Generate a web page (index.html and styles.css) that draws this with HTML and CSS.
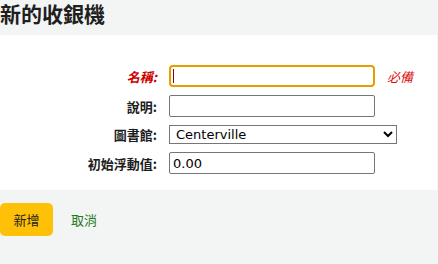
FILE: index.html
```html
<!DOCTYPE html>
<html lang="zh-Hant">
<head>
<meta charset="utf-8">
<title>新的收銀機</title>
<link rel="stylesheet" href="styles.css">
</head>
<body>
<h1 class="title">新的收銀機</h1>
<form class="form">
  <div class="panel">
    <div class="row">
      <label class="label required" for="name">名稱:</label>
      <span class="field-wrap">
        <input id="name" class="input input-focus" type="text">
        <span class="caret"></span>
      </span>
      <span class="req-note">必備</span>
    </div>
    <div class="row">
      <label class="label" for="desc">說明:</label>
      <input id="desc" class="input" type="text">
    </div>
    <div class="row">
      <label class="label" for="branch">圖書館:</label>
      <select id="branch" class="select">
        <option>Centerville</option>
      </select>
    </div>
    <div class="row">
      <label class="label" for="float">初始浮動值:</label>
      <input id="float" class="input" type="text" value="0.00">
    </div>
  </div>
  <div class="actions">
    <button type="button" class="btn-primary">新增</button>
    <a class="cancel" href="#">取消</a>
  </div>
</form>
</body>
</html>
```

FILE: styles.css
```css
html, body {
  margin: 0;
  padding: 0;
}
body {
  background: #f3f4f4;
  font-family: "DejaVu Sans", "Noto Sans CJK TC", sans-serif;
  color: #1d1d1d;
  width: 438px;
  height: 264px;
  overflow: hidden;
}
.title {
  margin: 0 0 8px 0;
  padding: 0;
  font-size: 21px;
  line-height: 27px;
  font-weight: bold;
  font-family: "Noto Sans CJK TC", sans-serif;
  color: #1f1f1f;
}
.form {
  margin: 0;
}
.panel {
  background: #fff;
  margin-right: 1px;
  padding: 30px 0 16px 0;
  display: flex;
  flex-direction: column;
  gap: 8px;
}
.row {
  display: flex;
  align-items: center;
  gap: 12px;
}
.label {
  width: 157px;
  text-align: right;
  font-family: "Noto Sans CJK TC", sans-serif;
  font-size: 13px;
  font-weight: bold;
  color: #1d1d1d;
}
.label.required {
  color: #cc0000;
  font-style: italic;
}
.field-wrap {
  position: relative;
  display: inline-block;
}
.input {
  box-sizing: border-box;
  width: 206px;
  height: 22px;
  margin: 0;
  border: 1px solid #767676;
  border-radius: 2px;
  padding: 0 3px;
  font-family: "DejaVu Sans", sans-serif;
  font-size: 13px;
  color: #000;
  background: #fff;
}
.input-focus {
  display: block;
  height: 22px;
  border: 2px solid #e69d00;
  border-radius: 4px;
  outline: none;
}
.caret {
  position: absolute;
  left: 4px;
  top: 4px;
  width: 1px;
  height: 14px;
  background: #8b0000;
}
.req-note {
  font-family: "Noto Sans CJK TC", sans-serif;
  font-size: 13px;
  font-style: italic;
  color: #dd1111;
}
.select {
  box-sizing: border-box;
  width: 228px;
  height: 19px;
  margin: 0;
  border: 1px solid #767676;
  border-radius: 0;
  padding: 0 0 0 2px;
  font-family: "DejaVu Sans", sans-serif;
  font-size: 13px;
  color: #000;
  background: #fff;
}
.actions {
  display: flex;
  align-items: center;
  gap: 18px;
  padding-top: 13px;
}
.btn-primary {
  width: 53px;
  height: 33px;
  border: none;
  border-radius: 5px;
  background: #ffc107;
  font-family: "Noto Sans CJK TC", sans-serif;
  font-size: 13px;
  color: #1d1d1d;
  padding: 0;
}
.cancel {
  font-family: "Noto Sans CJK TC", sans-serif;
  font-size: 13px;
  color: #1f7a1f;
  text-decoration: none;
}
```
